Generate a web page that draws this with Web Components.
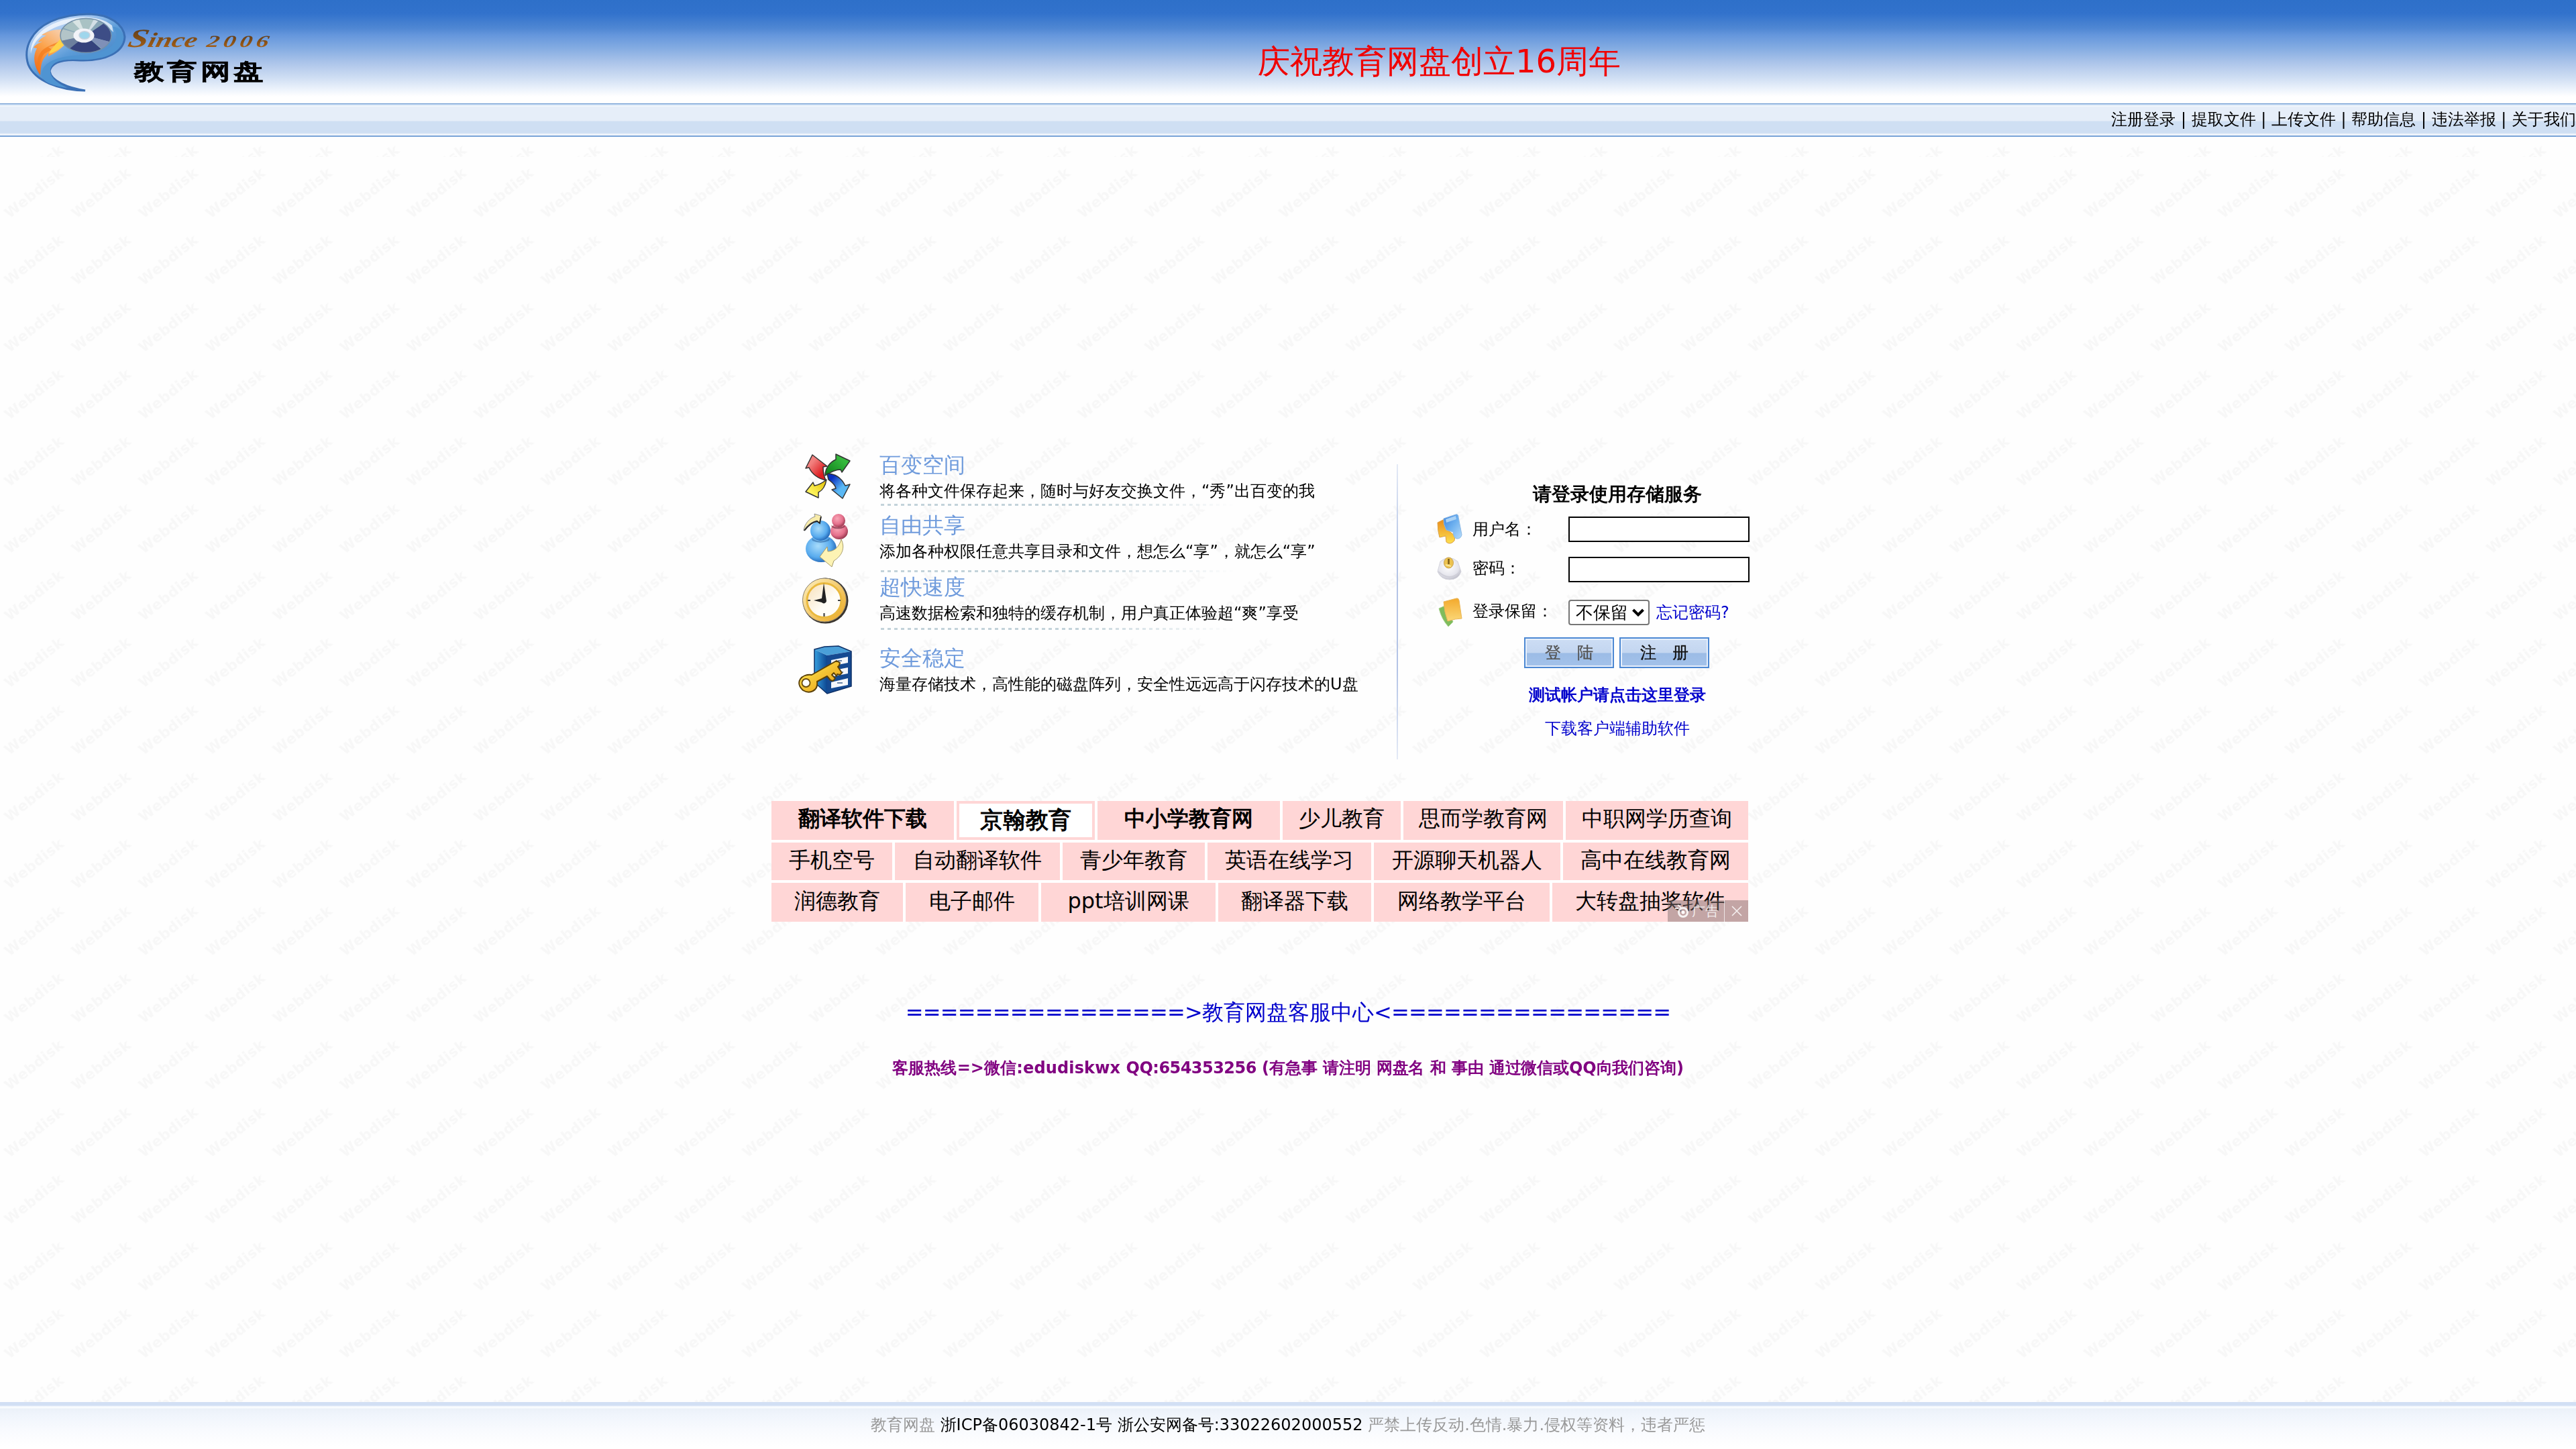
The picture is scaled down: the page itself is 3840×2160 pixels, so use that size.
<!DOCTYPE html>
<html>
<head>
<meta charset="utf-8">
<title>教育网盘</title>
<style>
html,body{margin:0;padding:0;background:#fefefe}
body{font-family:"DejaVu Sans","Droid Sans Fallback";font-size:24px;color:#000}
</style>
</head>
<body>
<disk-page></disk-page>
<script>
const define = (name, html) => {
  const tpl = document.createElement('template');
  tpl.innerHTML = html;
  customElements.define(name, class extends HTMLElement {
    constructor() {
      super();
      this.attachShadow({ mode: 'open' }).appendChild(tpl.content.cloneNode(true));
    }
  });
};

define('disk-logo', `
<style>:host{display:block;width:420px;height:154px}svg{display:block}</style>
<svg width="420" height="154" viewBox="0 0 420 154">
  <defs>
    <linearGradient id="body" x1="0" y1="0" x2="0.7" y2="1"><stop offset="0" stop-color="#dfeafb"/><stop offset=".3" stop-color="#a8c9f0"/><stop offset=".55" stop-color="#5b9bd8"/><stop offset="1" stop-color="#3c74b8"/></linearGradient>
    <linearGradient id="fire" x1="0.7" y1="0" x2="0.2" y2="1"><stop offset="0" stop-color="#f8c9a0"/><stop offset=".45" stop-color="#fba24a"/><stop offset="1" stop-color="#f06a1c"/></linearGradient>
    <linearGradient id="ink" x1="0" y1="0" x2="0" y2="1"><stop offset="0" stop-color="#4a3420"/><stop offset="1" stop-color="#b8670f"/></linearGradient>
    <clipPath id="disc"><ellipse cx="128" cy="53" rx="38" ry="25.5"/></clipPath>
    <filter id="soft" x="-10%" y="-10%" width="120%" height="120%"><feGaussianBlur stdDeviation="0.7"/></filter>
  </defs>
  <g filter="url(#soft)">
    <path d="M127 135C88 134 52 121 42 96C34 70 48 45 76 32C96 23 116 21 134 21C164 22 184 36 186 55C185 78 158 91 120 90C94 88 77 93 74 106C76 121 101 131 127 135Z" fill="url(#body)" stroke="#3a6fb5" stroke-width="3"/>
    <path d="M168 40C186 62 158 80 128 82C92 82 66 90 62 108C60 122 78 128 100 131C82 122 74 114 75 104C78 90 96 88 120 89C156 90 182 78 184 56C183 48 178 40 168 40Z" fill="#4f94d2"/>
    <path d="M46 80C44 60 62 38 98 29C120 24 150 23 167 38L169 48C158 34 120 26 90 38C66 46 50 60 46 80Z" fill="#fff" opacity=".7"/>
    <path d="M91 44C78 44 70 47 62 52L69 53C62 56 58 60 57 63L63 62C54 66 51 69 50 71L55 72C48 84 51 100 60 112C61 100 61 92 67 85L72 79L72 84C80 80 90 74 96 67C92 60 90 52 91 44Z" fill="url(#fire)"/>
    <path d="M90 60L82 68L72 70L77 74L66 80C60 88 58 96 60 110C53 96 55 86 62 76C70 68 82 66 90 60Z" fill="#f47c1c" opacity=".75"/>
    <path d="M90 58C84 66 76 72 73 80C82 78 90 72 95 67Z" fill="#ffd24a"/>
    <g clip-path="url(#disc)">
      <rect x="88" y="26" width="80" height="54" fill="#8aa8b8"/>
      <path d="M128 53L88 62L88 42Z" fill="#b3c4c8"/>
      <path d="M128 53L90 40L106 26L146 26Z" fill="#a9c2c4"/>
      <path d="M128 53L104 28L116 24Z" fill="#d8e4e4"/>
      <path d="M128 53L142 24L149 28Z" fill="#d3dfe6"/>
      <path d="M128 53L156 34L172 40L170 64Z" fill="#3d4d86"/>
      <path d="M128 53L170 64L156 76Z" fill="#7f90b8"/>
      <path d="M128 53L154 76L120 84L100 72Z" fill="#34437c"/>
      <path d="M128 53L102 74L86 62Z" fill="#6c7f9e"/>
    </g>
    <ellipse cx="128" cy="53" rx="38" ry="25.5" fill="none" stroke="#7390a8" stroke-width="1.5"/>
    <ellipse cx="125" cy="53" rx="15.5" ry="10.5" fill="#f2f3f8"/>
    <ellipse cx="126" cy="52.5" rx="8" ry="5.8" fill="#9fd6ec" stroke="#c6d2de" stroke-width="1.5"/>
    <g font-family="'Liberation Serif',serif" font-style="italic" font-weight="bold" fill="url(#ink)">
      <text transform="translate(189 70) skewX(-14)" font-size="31" textLength="103" lengthAdjust="spacingAndGlyphs"><tspan font-size="39">S</tspan>ince</text>
      <text transform="translate(307 70) skewX(-12)" font-size="25" textLength="98" lengthAdjust="spacingAndGlyphs" letter-spacing="4">2006</text>
    </g>
    <text transform="translate(200 118) scale(1.08 .8)" font-weight="bold" font-size="41" textLength="178" fill="#000" stroke="#000" stroke-width=".6">教育网盘</text>
  </g>
</svg>`);

define('disk-header', `
<style>
:host{display:flex;height:154px;background:linear-gradient(#2e70c9 0,#3272cc 20px,#4f87d3 42px,#6496dc 52px,#84ace2 72px,#adc5ea 94px,#cfdef3 116px,#eef4fc 134px,#fff 144px)}
.slogan{flex:1;display:flex;padding-left:1455px;padding-top:61px;font-size:48px;line-height:60px;color:#f00000;white-space:nowrap}
</style>
<disk-logo></disk-logo><div class="slogan">庆祝教育网盘创立16周年</div>`);

define('disk-nav', `
<style>
:host{display:flex;justify-content:flex-end;height:50px;box-sizing:border-box;padding-top:9px;line-height:30px;white-space:pre;
background:linear-gradient(#79a2d5 0 1px,#a9c7ea 1px 2px,#e2edf9 2px 4px,#f3f7fc 4px 5px,#e6eef9 5px 26px,#cfdff3 27px 44px,#dce8f6 45px,#f1f5fb 46px 48px,#79a4d8 48px 50px)}
</style>
<span>注册登录 | 提取文件 | 上传文件 | 帮助信息 | 违法举报 | 关于我们</span>`);

/* feature row: icon slot, title slot, description */
define('feature-row', `
<style>
:host{display:grid;grid-template-columns:126px 1fr;height:var(--h)}
.icon{display:block;margin-top:var(--it)}
.txt{display:flex;flex-direction:column;padding-top:var(--tt)}
.t{font-size:32px;line-height:36px;height:36px;color:#6f9bdc}
.d{margin-top:7px;line-height:28px;height:28px;white-space:nowrap}
.dots{margin-top:auto;margin-left:2px;height:3px;width:530px;display:var(--dots,block);background:repeating-linear-gradient(90deg,#c3d3da 0 5px,transparent 5px 10px);-webkit-mask:linear-gradient(90deg,#000 55%,transparent)}
</style>
<div class="icon"><slot name="icon"></slot></div>
<div class="txt"><div class="t"><slot name="title"></slot></div><div class="d"><slot></slot></div><div class="dots"></div></div>`);

define('feature-list', `
<style>
:host{display:flex;flex-direction:column;width:897px}
svg{display:block;overflow:visible}
</style>
<feature-row style="--h:84px;--it:0px;--tt:5px">
  <svg slot="icon" width="90" height="80" viewBox="0 0 90 80">
    <defs>
      <linearGradient id="r" x1="0" y1="0" x2="1" y2="1"><stop offset=".3" stop-color="#f2807e"/><stop offset=".75" stop-color="#dc1c20"/></linearGradient>
      <linearGradient id="g" x1="1" y1="0" x2="0" y2="1"><stop offset=".3" stop-color="#34b83c"/><stop offset="1" stop-color="#0c7a18"/></linearGradient>
      <linearGradient id="b" x1="0" y1="0" x2="1" y2="1"><stop offset=".2" stop-color="#0a2fc0"/><stop offset=".6" stop-color="#5ab8f4"/></linearGradient>
      <linearGradient id="y" x1="0" y1="1" x2="1" y2="0"><stop offset=".3" stop-color="#fdf35a"/><stop offset="1" stop-color="#e0bc00"/></linearGradient>
    </defs>
    <g stroke="#333" stroke-width="1.5" stroke-linejoin="round">
      <path d="M26 8L16 28L21 27C25 36 34 43 46 46C43 40 42 34 42 26L48 25Z" fill="url(#r)"/>
      <path d="M61 7L82 17L70 34L68 30C60 30 54 33 45 39C45 28 52 19 61 15Z" fill="url(#g)"/>
      <path d="M48 36C62 36 70 44 75 54L82 52L71 73L55 60L61 58C60 52 54 48 50 45Z" fill="url(#b)"/>
      <path d="M47 45C45 57 39 62 35 64L35 72L16 63L27 49L29 54C35 53 41 50 47 45Z" fill="url(#y)"/>
    </g>
  </svg>
  <span slot="title">百变空间</span>将各种文件保存起来，随时与好友交换文件，“秀”出百变的我
</feature-row>
<feature-row style="--h:99px;--it:6px;--tt:11px">
  <svg slot="icon" width="90" height="88" viewBox="0 0 90 88">
    <defs>
      <radialGradient id="p" cx=".4" cy=".35" r=".7"><stop offset="0" stop-color="#f8a6b6"/><stop offset=".6" stop-color="#e5708c"/><stop offset="1" stop-color="#8c2f46"/></radialGradient>
      <radialGradient id="q" cx=".4" cy=".4" r=".65"><stop offset="0" stop-color="#a8dcfb"/><stop offset=".65" stop-color="#58abee"/><stop offset="1" stop-color="#1d5fb0"/></radialGradient>
    </defs>
    <ellipse cx="66" cy="32" rx="13" ry="12" fill="url(#p)"/>
    <circle cx="65" cy="16" r="10" fill="url(#p)"/>
    <path d="M54 23Q64 29 75 23L74 26Q64 31 55 26Z" fill="#6c2438" opacity=".6"/>
    <ellipse cx="39" cy="58" rx="23" ry="20" fill="url(#q)"/>
    <circle cx="38" cy="31" r="15" fill="url(#q)"/>
    <path d="M25 42Q38 51 52 42L51 46Q38 52 26 46Z" fill="#1a4d8c" opacity=".45"/>
    <path d="M13 31C14 21 22 12 30 10L29 6L39 9L36 20L33 16C24 18 17 24 13 31Z" fill="#f8ecaa" stroke="#777" stroke-width=".8"/>
    <path d="M14 31C20 23 26 18 33 17L37 20L39 10" fill="none" stroke="#222" stroke-width="1.8"/>
    <path d="M69 44C75 56 71 68 58 76L55 85L37 70L48 55L49 62C60 62 66 54 69 44Z" fill="#fdf3b4" stroke="#a59a68" stroke-width="1"/>
  </svg>
  <span slot="title">自由共享</span>添加各种权限任意共享目录和文件，想怎么“享”，就怎么“享”
</feature-row>
<feature-row style="--h:86px;--it:5px;--tt:4px">
  <svg slot="icon" width="90" height="76" viewBox="0 0 90 76">
    <defs><linearGradient id="f" x1="0" y1="0" x2="1" y2="1"><stop offset="0" stop-color="#f7e0b8"/><stop offset=".6" stop-color="#fffdf8"/></linearGradient>
    <linearGradient id="k" x1="0" y1="0" x2="1" y2="1"><stop offset="0" stop-color="#fdf0c0"/><stop offset="1" stop-color="#eba71e"/></linearGradient></defs>
    <ellipse cx="45.5" cy="37.5" rx="34" ry="34" fill="#3a352e"/>
    <circle cx="44" cy="36.5" r="32.5" fill="url(#k)" stroke="#8a8272" stroke-width="1"/>
    <circle cx="43.5" cy="37" r="25.5" fill="url(#f)" stroke="#eab93e" stroke-width="3"/>
    <path d="M43 11L47 38A4 4 0 0 1 40 40L28 37L40 34Z" fill="#222"/>
    <path d="M19 37h4M64 37h4M43.5 56v5" stroke="#444" stroke-width="2.2"/>
  </svg>
  <span slot="title">超快速度</span>高速数据检索和独特的缓存机制，用户真正体验超“爽”享受
</feature-row>
<feature-row style="--h:101px;--it:22px;--tt:24px;--dots:none">
  <svg slot="icon" width="90" height="78" viewBox="0 0 90 78">
    <defs><linearGradient id="c" x1="0" y1="0" x2="1" y2="0"><stop offset="0" stop-color="#36a0e0"/><stop offset="1" stop-color="#0d4690"/></linearGradient>
    <linearGradient id="m" x1="0" y1="0" x2="1" y2="1"><stop offset="0" stop-color="#fff25a"/><stop offset="1" stop-color="#e8940c"/></linearGradient></defs>
    <path d="M29 7L48 16L48 73L29 56Z" fill="url(#c)"/>
    <path d="M29 7L44 3L65 2L84 10L48 16Z" fill="#4a9fd8"/>
    <path d="M48 16L84 10L84 62L48 73Z" fill="#154a92"/>
    <path d="M29 7L44 3L65 2L84 10L84 62L48 73L29 56Z" fill="none" stroke="#0d2f66" stroke-width="1.5"/>
    <path d="M54 23L79 18V27L54 32ZM54 39L79 34V43L54 48ZM54 56L79 50V60L54 65Z" fill="#f4f7fc"/>
    <path d="M64 24h6M66 41h6M63 57h8" stroke="#6c86a8" stroke-width="2"/>
    <path d="M62 24L67 27L66 31L64 33L70 42L67 45L63 44L62 47L58 42L55 45L60 50L57 54L53 53L48 47L33 55C35 69 22 74 12 68C-1 56 10 43 25 45Z" fill="url(#m)" stroke="#5b4108" stroke-width="2" stroke-linejoin="round"/>
    <circle cx="16.5" cy="57" r="6" fill="#fdfdfd" stroke="#6a4c0c" stroke-width="1.8"/>
  </svg>
  <span slot="title">安全稳定</span>海量存储技术，高性能的磁盘阵列，安全性远远高于闪存技术的U盘
</feature-row>`);

define('image-button', `
<style>
:host{display:flex;align-items:center;justify-content:center;gap:24px;box-sizing:border-box;width:134px;height:46px;border:2px solid #4c88d3;
box-shadow:inset 0 0 0 2px #e6effb;background:linear-gradient(#cdddf4 0,#c3d6f0 50%,#9cbce6 52%,#a3c2ea 100%);line-height:30px;color:var(--c,#111);-webkit-text-stroke:.4px}
</style><slot></slot>`);

define('login-form', `
<style>
:host{display:flex;flex-direction:column;align-items:center;width:538px;margin-left:57px;padding-top:49px;box-sizing:border-box}
h1{margin:0 0 9px;font-size:28px;line-height:36px;height:36px}
.row{display:grid;grid-template-columns:53px 143px 1fr;align-items:center;width:538px;height:50px}
.row svg{display:block}
.row label{line-height:30px;padding-bottom:var(--lb,4px)}
input{box-sizing:border-box;width:270px;height:38px;border:2px solid #000;background:#fff;padding:0;outline:none}
.keep{display:flex;align-items:center;gap:10px}
.sel{display:grid;width:121px;height:38px}
.sel>*{grid-area:1/1}
select{appearance:none;box-sizing:border-box;width:121px;height:38px;margin:0;padding:0 0 0 9px;border:2px solid #767676;border-radius:4px;background:#fff;font-family:inherit;font-size:26px;line-height:32px;color:#000}
.sel svg{justify-self:end;align-self:center;margin-right:7px}
a{color:#0000cc;white-space:nowrap}
.btns{display:flex;gap:8px;margin:12px 2px 0 0}
.b{font-weight:bold;line-height:32px;margin-top:24px}
.l{line-height:32px;margin-top:18px}
</style>
<h1>请登录使用存储服务</h1>
<div class="row" style="--lb:0px">
  <svg width="42" height="48" viewBox="0 0 42 48">
    <defs><linearGradient id="a" x1="0" y1="0" x2="1" y2="1"><stop offset="0" stop-color="#3d82dc"/><stop offset=".5" stop-color="#6fb2f0"/><stop offset="1" stop-color="#b8dcfa"/></linearGradient>
    <linearGradient id="o" x1="0" y1="0" x2="0" y2="1"><stop offset="0" stop-color="#ea8a1c"/><stop offset="1" stop-color="#fde04e"/></linearGradient></defs>
    <path d="M1 14L11 9L13 24L20 28L27 34L26 41Q20 48 14 43L13 34L4 36Q1 26 1 14Z" fill="url(#o)" stroke="#dba044" stroke-width="1"/>
    <path d="M10 8L28 2Q32 1 32 6L37 32Q36 38 30 38Q25 38 24 28L14 25Q9 16 10 8Z" fill="url(#a)" stroke="#8cb8e4" stroke-width="1"/>
    <path d="M13 9L28 4L29 9L14 14Z" fill="#a9d2f6"/>
  </svg><label>用户名：</label><input aria-label="用户名">
</div>
<div class="row" style="margin-top:10px">
  <svg width="42" height="48" viewBox="0 0 42 48">
    <defs><radialGradient id="w" cx=".45" cy=".4" r=".65"><stop offset="0" stop-color="#fff"/><stop offset=".7" stop-color="#e4e4ec"/><stop offset="1" stop-color="#b4b4c0"/></radialGradient></defs>
    <path d="M5 12Q18 1 31 12L36 27Q32 39 19 39Q6 39 1 27Z" fill="url(#w)" stroke="#d4d4dc" stroke-width="1"/>
    <path d="M2 27Q19 43 35 27" fill="none" stroke="#cfcfd8" stroke-width="2"/>
    <ellipse cx="17.5" cy="14" rx="7" ry="8" fill="#ecc24e" stroke="#c8a55a" stroke-width="1"/>
    <path d="M17.5 8v8" stroke="#7c5c18" stroke-width="2.5"/><path d="M13 17l8 2" stroke="#f9e79c" stroke-width="2"/>
  </svg><label>密码：</label><input type="password" aria-label="密码">
</div>
<div class="row" style="margin-top:14px">
  <svg width="42" height="48" viewBox="0 0 42 48">
    <defs><linearGradient id="n" x1="0" y1="0" x2="0" y2="1"><stop offset="0" stop-color="#f3a92c"/><stop offset="1" stop-color="#fbd878"/></linearGradient></defs>
    <path d="M3 18L12 14L24 38L17 45Q7 34 3 18Z" fill="#7fbc5c" stroke="#a4cf8c" stroke-width="1"/>
    <path d="M10 8L29 3Q32 2 33 6L37 33Q28 33 16 37Q11 24 10 8Z" fill="url(#n)" stroke="#e8b458" stroke-width="1"/>
  </svg><label>登录保留：</label>
  <div class="keep"><div class="sel"><select aria-label="登录保留"><option>不保留</option></select><svg width="20" height="14" viewBox="0 0 20 14"><path d="M2.5 3L10 10.5L17.5 3" fill="none" stroke="#000" stroke-width="4"/></svg></div><a>忘记密码?</a></div>
</div>
<div class="btns"><image-button style="--c:#555"><span>登</span><span>陆</span></image-button><image-button><span>注</span><span>册</span></image-button></div>
<a class="b">测试帐户请点击这里登录</a>
<a class="l">下载客户端辅助软件</a>`);

/* advert grid: three rows of pink cells */
const adRows = [
  [58, [[272,'翻译软件下载','b'],[206,'京翰教育','b x'],[272,'中小学教育网','b'],[176,'少儿教育'],[238,'思而学教育网'],[272,'中职网学历查询']]],
  [56, [[180,'手机空号'],[246,'自动翻译软件'],[212,'青少年教育'],[244,'英语在线学习'],[278,'开源聊天机器人'],[276,'高中在线教育网']]],
  [58, [[196,'润德教育'],[198,'电子邮件'],[260,'ppt培训网课'],[228,'翻译器下载'],[262,'网络教学平台'],[292,'大转盘抽奖软件']]]
];
define('ad-board', `
<style>
:host{display:flex;flex-direction:column;gap:4px;width:1456px;position:relative;background:#fff}
.r{display:flex;gap:4px}
.r>div{box-sizing:border-box;background:#ffd6d6;font-size:32px;display:flex;align-items:center;justify-content:center;padding-bottom:4px;line-height:40px;white-space:nowrap}
.r:first-of-type>div{padding-bottom:6px}
.r>.b{font-weight:bold}
.r:first-of-type>.x{background:#fff;border:4px solid #ffd6d6;font-size:34px;padding-bottom:3px}
.tag{position:absolute;right:0;bottom:0;width:120px;height:32px;display:flex;background:rgba(130,110,110,.48);color:rgba(255,255,255,.8)}
.tag .n{width:85px;box-sizing:border-box;border-right:1px solid rgba(255,255,255,.7);display:flex;align-items:center;padding-left:10px;gap:4px;font-size:20px;line-height:28px}
.tag svg{display:block;flex:none}
.tag .c{flex:1;display:flex;align-items:center;justify-content:center}
</style>
${adRows.map(([h, cells]) => `<div class="r">${cells.map(([w, t, c = '']) => `<div class="${c}" style="width:${w}px;height:${h}px">${t}</div>`).join('')}</div>`).join('')}
<div class="tag"><div class="n"><svg width="22" height="22" viewBox="0 0 22 22" fill="none" stroke="rgba(255,255,255,.85)"><circle cx="13" cy="13" r="6.5" stroke-width="3"/><circle cx="13" cy="13" r="2.5" fill="#fff" stroke="none"/><path d="M1 7h5M5 2l5 4" stroke-width="2"/></svg><span>广告</span></div>
<div class="c"><svg width="16" height="16" viewBox="0 0 16 16"><path d="M1 1L15 15M15 1L1 15" stroke="rgba(255,255,255,.85)" stroke-width="1.5"/></svg></div></div>`);

define('disk-footer', `
<style>
:host{display:flex;justify-content:center;height:70px;box-sizing:border-box;padding-top:19px;line-height:30px;white-space:pre;color:#999;
background:linear-gradient(#d2dff4 0 5px,#e9f1fb 6px,#f8fbfe 7px 9px,#ebf1f9 10px,#f0f5fc 20px,#f8fafe 40px,#fff 66px)}
b{font-weight:normal;color:#000}
</style>
<span>教育网盘 <b>浙ICP备06030842-1号 浙公安网备号:33022602000552</b> 严禁上传反动.色情.暴力.侵权等资料，违者严惩</span>`);

const tile = "url(\"data:image/svg+xml," + encodeURIComponent(
  `<svg xmlns="http://www.w3.org/2000/svg" width="100" height="100"><text transform="translate(14 92) rotate(-38.5)" font-family="DejaVu Sans" font-weight="bold" font-size="21" fill="#f7f7f7" stroke="#fafafa" stroke-width=".8" textLength="105">Webdisk</text></svg>`) + "\")";

define('disk-page', `
<style>
:host{display:flex;flex-direction:column;width:3840px;height:2160px;overflow:hidden}
.strip{height:30px;background:${tile} 0 -4px}
main{flex:1;display:flex;flex-direction:column;background:${tile} 0 0;padding-top:436px}
.zone{display:flex;align-items:flex-start;height:524px;padding-left:1185px}
.rule{width:2px;height:440px;margin-top:22px;background:linear-gradient(#e4eaf6,#b4c4e6 30%,#b4c4e6 70%,#e4eaf6)}
login-form{margin-left:58px}
ad-board{margin-left:1150px}
.service{font-size:32px;line-height:40px;margin-top:115px;text-align:center;color:#0000cc}
.service i{font-style:normal;letter-spacing:-.8px}
.hot{font-weight:bold;line-height:32px;margin-top:47px;text-align:center;color:#800080;letter-spacing:-.12px}
.hot .w{letter-spacing:.13px}
.hot .q{letter-spacing:-.54px}
</style>
<disk-header></disk-header>
<disk-nav></disk-nav>
<div class="strip"></div>
<main>
  <div class="zone"><feature-list></feature-list><div class="rule"></div><login-form></login-form></div>
  <ad-board></ad-board>
  <div class="service"><i>================&gt;</i>教育网盘客服中心<i>&lt;================</i></div>
  <div class="hot"><span class="w">客服热线=&gt;微信:edudiskwx </span><span class="q">QQ:654353256</span> (有急事 请注明 网盘名 和 事由 通过微信或QQ向我们咨询)</div>
</main>
<disk-footer></disk-footer>`);
</script>
</body>
</html>
